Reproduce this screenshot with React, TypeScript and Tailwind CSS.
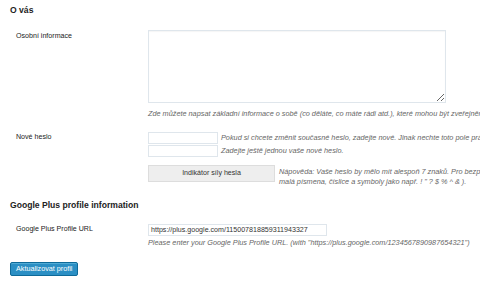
import React from "react";

const Row = ({ label, children, labelTop = "pt-[1px]" }: { label: string; children: React.ReactNode; labelTop?: string }) => (
    <div className="flex">
        <div className={`w-[138px] shrink-0 pl-[6px] text-[7.1px] leading-[10px] text-[#222] ${labelTop}`}>{label}</div>
        <div className="flex flex-col">{children}</div>
    </div>
);

const Hint = ({ children, className = "" }: { children: React.ReactNode; className?: string }) => (
    <p className={`whitespace-nowrap text-[7.3px] italic leading-[10px] text-[#666] ${className}`}>{children}</p>
);

export default function App() {
    return (
        <div className="w-[480px] h-[285px] overflow-hidden bg-white px-[10px] font-['Liberation_Sans',Arial,sans-serif]">
            <h2 className="pt-[5px] text-[8.6px] font-bold leading-[11px] text-[#222]">O vás</h2>

            <div className="mt-[14px]">
                <Row label="Osobní informace">
                    <textarea className="block h-[73px] w-[298px] border border-[#dfe6ec] bg-white outline-none shadow-[inset_0_1px_1px_rgba(0,0,0,0.04)]" />
                    <Hint className="mt-[6px]">
                        Zde můžete napsat základní informace o sobě (co děláte, co máte rádi atd.), které mohou být zveřejněny.
                    </Hint>
                </Row>
            </div>

            <div className="mt-[13px]">
                <Row label="Nové heslo" labelTop="pt-[0px]">
                    <div className="flex items-center gap-[3px]">
                        <input type="password" className="block h-[12px] w-[70px] border border-[#dfe6ec] bg-white outline-none" />
                        <Hint>Pokud si chcete změnit současné heslo, zadejte nové. Jinak nechte toto pole prázdné.</Hint>
                    </div>
                    <div className="mt-[1px] flex items-center gap-[3px]">
                        <input type="password" className="block h-[12px] w-[70px] border border-[#dfe6ec] bg-white outline-none" />
                        <Hint>Zadejte ještě jednou vaše nové heslo.</Hint>
                    </div>
                    <div className="mt-[8px] flex items-start gap-[4px]">
                        <div className="flex h-[17px] w-[127px] items-center justify-center border border-[#dddddd] bg-[#eeeeee] text-[7.1px] text-[#333]">
                            Indikátor síly hesla
                        </div>
                        <div className="pt-[2px]">
                            <Hint>Nápověda: Vaše heslo by mělo mít alespoň 7 znaků. Pro bezpečnější heslo použijte velká a</Hint>
                            <Hint>malá písmena, číslice a symboly jako např. ! " ? $ % ^ & ).</Hint>
                        </div>
                    </div>
                </Row>
            </div>

            <h2 className="mt-[13px] text-[8.6px] font-bold leading-[11px] text-[#222]">Google Plus profile information</h2>

            <div className="mt-[13px]">
                <Row label="Google Plus Profile URL" labelTop="pt-[0px]">
                    <div className="flex h-[12px] w-[179px] items-center border border-[#dfe6ec] bg-white px-[2px] text-[7.1px] text-[#333]">
                        https://plus.google.com/115007818859311943327
                    </div>
                    <Hint className="mt-[2px]">
                        Please enter your Google Plus Profile URL. (with "https://plus.google.com/1234567890987654321")
                    </Hint>
                </Row>
            </div>

            <button className="mt-[14px] flex h-[14px] items-center rounded-[2px] border border-[#0e6a99] bg-[#2b8fc4] px-[5px] text-[7.2px] text-white shadow-[inset_0_1px_0_rgba(120,200,230,0.5)]">
                Aktualizovat profil
            </button>
        </div>
    );
}
